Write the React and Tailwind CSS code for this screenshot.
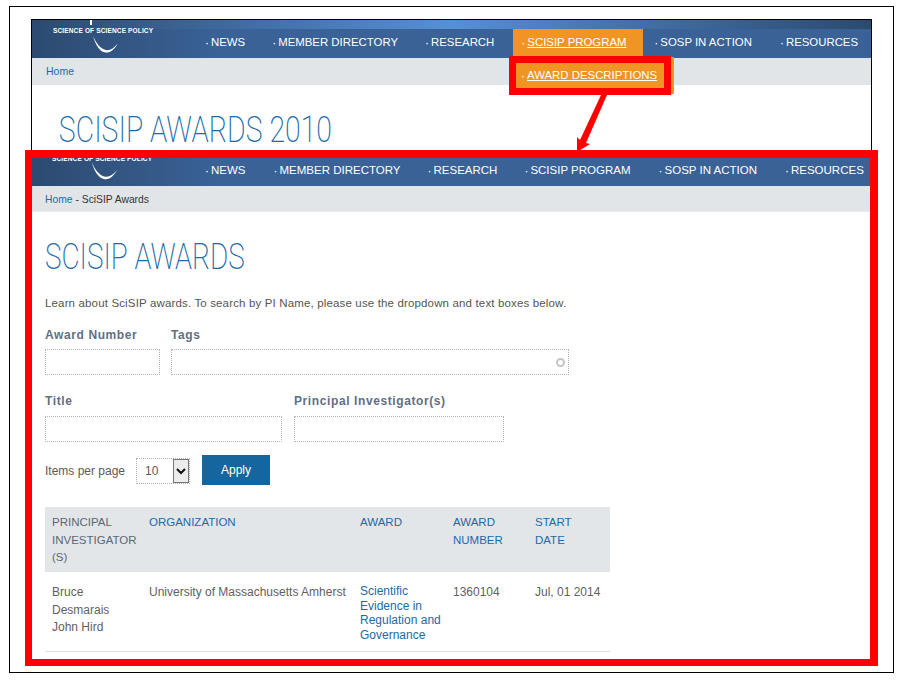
import React from "react";

const sans = "font-['Liberation_Sans',Arial,sans-serif]";

const upperNav = [
  { label: "NEWS", cls: "ml-[173px]" },
  { label: "MEMBER DIRECTORY", cls: "ml-[27px]" },
  { label: "RESEARCH", cls: "ml-[27px]" },
];

const lowerNav = [
  { label: "NEWS", cls: "ml-[173px]" },
  { label: "MEMBER DIRECTORY", cls: "ml-[28px]" },
  { label: "RESEARCH", cls: "ml-[27px]" },
  { label: "SCISIP PROGRAM", cls: "ml-[27px]" },
  { label: "SOSP IN ACTION", cls: "ml-[28px]" },
  { label: "RESOURCES", cls: "ml-[28px]" },
];

function Swoosh({ className }) {
  return (
    <svg className={className} viewBox="0 0 28 18" fill="none">
      <path d="M1 0C4 8 9 14 15 15C19 15.500 23 13 27 8C23 15 19 18 14 17.500C8 17 3 9 1 0Z" fill="#ffffff" />
    </svg>
  );
}

function NavItem({ label, cls }) {
  return (
    <span className={`${cls} flex items-center pb-[2px] text-white whitespace-nowrap`}>
      <span className="mr-[2px] text-[12px]">·</span>
      {label}
    </span>
  );
}

function Field({ label, width, gap, children }) {
  return (
    <div className={width}>
      <div className={`${gap} text-[12px] font-bold tracking-[0.6px] text-[#5f6f85] leading-[14px]`}>{label}</div>
      <div className="h-[26px] border border-dotted border-[#b4b4b4] flex items-center justify-end pr-[3px]">
        {children}
      </div>
    </div>
  );
}

export default function App() {
  return (
    <div className={`${sans} w-[902px] h-[684px] bg-white pt-[6px] pl-[9px] overflow-hidden`}>
      <div className="relative w-[885px] h-[667px] border border-black pt-[12px] pl-[21px]">
        {/* first page capture, the lower capture sits on top of it */}
        <div className="w-[841px] h-[132px] border-t border-x border-black">
          <div className="relative h-[38px] flex flex-col">
            <div className="h-[9px] bg-gradient-to-r from-[#2c4a70] via-[#5590d8] to-[#2c4a70]" />
            <div className="h-[29px] flex items-center text-[11.400px] bg-gradient-to-r from-[#2c4a70] from-0% to-[#3a6296] to-[22%]">
              {upperNav.map((item) => (
                <NavItem key={item.label} {...item} />
              ))}
              <div className="ml-[19px] w-[130px] h-full bg-[#f09423] flex items-center pl-[8px] pb-[2px] text-white">
                <span className="mr-[2px] text-[12px]">·</span>
                <span className="underline">SCISIP PROGRAM</span>
              </div>
              <NavItem label="SOSP IN ACTION" cls="ml-[11px]" />
              <NavItem label="RESOURCES" cls="ml-[28px]" />
            </div>
            <div className="absolute left-[21px] top-[6px] text-[6.500px] font-bold tracking-[0.15px] text-white whitespace-nowrap">
              SCIENCE OF SCIENCE POLICY
            </div>
            <div className="absolute left-[58px] top-0 w-[2px] h-[5px] bg-white" />
            <Swoosh className="absolute left-[60px] top-[16px] w-[27px] h-[17px]" />
          </div>
          <div className="h-[27px] bg-[#e1e5e8] flex items-center pl-[14px] text-[10.500px] text-[#1c6aa6]">Home</div>
          <h1 className="pl-[34px] mt-[27px] text-[36px] leading-[36px] font-['Roboto',sans-serif] font-extralight text-[#1c6aa6] whitespace-nowrap origin-left scale-x-[0.79]">
            SCISIP AWARDS 2010
          </h1>
        </div>

        {/* highlight round the dropdown entry */}
        <div className="absolute left-[499px] top-[50px] w-[165px] h-[37px] bg-[#f09423]">
          <div className="w-[162px] h-[39px] -mt-px border-[7px] border-[#ff0000] bg-[#f09423] flex items-center pl-[5px] text-[11.400px] text-white whitespace-nowrap">
            <span className="mr-[2px] text-[12px]">·</span>
            <span className="underline">AWARD DESCRIPTIONS</span>
          </div>
        </div>

        {/* arrow from the dropdown down to the lower capture */}
        <svg className="absolute left-[560px] top-[88px] w-[40px] h-[58px]" viewBox="0 0 40 58">
          <path d="M31 0L37 0L16 48L20 49L7 57L7 42L10 45Z" fill="#ff0000" />
        </svg>

        {/* second page capture */}
        <div className="absolute left-[15px] top-[143px] w-[853px] h-[516px] border-[7px] border-t-[8px] border-r-[8px] border-[#ff0000] bg-white overflow-hidden">
          <div className="relative h-[28px] flex items-center text-[11.500px] bg-gradient-to-r from-[#2c4a70] from-0% to-[#3a6296] to-[22%]">
            {lowerNav.map((item) => (
              <NavItem key={item.label} {...item} />
            ))}
            <div className="absolute left-[20px] -top-[4px] text-[6.500px] font-bold tracking-[0.15px] text-white whitespace-nowrap">
              SCIENCE OF SCIENCE POLICY
            </div>
            <Swoosh className="absolute left-[59px] top-[4px] w-[27px] h-[18px]" />
          </div>
          <div className="h-[26px] bg-[#e1e5e8] border-b border-[#e9ecee] flex items-center pl-[13px] pt-[2px] text-[10.300px] text-[#333]">
            <span className="text-[#1c6aa6]">Home</span>
            <span className="ml-[3px]">- SciSIP Awards</span>
          </div>

          <div className="pl-[13px]">
            <h1 className="mt-[27px] text-[36px] leading-[36px] font-['Roboto',sans-serif] font-extralight text-[#1c6aa6] whitespace-nowrap origin-left scale-x-[0.775]">
              SCISIP AWARDS
            </h1>
            <p className="mt-[21px] text-[11.500px] leading-[14px] tracking-[0.15px] text-[#555]">
              Learn about SciSIP awards. To search by PI Name, please use the dropdown and text boxes below.
            </p>

            <div className="mt-[18px] flex gap-[11px]">
              <Field label="Award Number" width="w-[115px]" gap="mb-[7px]" />
              <Field label="Tags" width="w-[398px]" gap="mb-[7px]">
                <span className="w-[9px] h-[9px] rounded-full border-2 border-[#c4c4c4]" />
              </Field>
            </div>
            <div className="mt-[19px] flex gap-[12px]">
              <Field label="Title" width="w-[237px]" gap="mb-[8px]" />
              <Field label="Principal Investigator(s)" width="w-[210px]" gap="mb-[8px]" />
            </div>

            <div className="mt-[13px] flex items-center text-[12px] text-[#5a5a5a]">
              <span className="w-[91px] mt-[1px]">Items per page</span>
              <div className="mt-[2px] w-[54px] h-[26px] border border-dotted border-[#b4b4b4] flex items-center justify-between pl-[8px]">
                <span>10</span>
                <span className="w-[16px] h-[24px] bg-[#ececec] border border-[#777] flex items-center justify-center">
                  <svg className="w-[10px] h-[8px]" viewBox="0 0 10 8" fill="none">
                    <path d="M1 2L5 6L9 2" stroke="#111111" strokeWidth="2" />
                  </svg>
                </span>
              </div>
              <div className="ml-[12px] w-[68px] h-[30px] bg-[#15669f] text-white text-[12px] flex items-center justify-center">
                Apply
              </div>
            </div>

            <div className="mt-[22px] w-[565px] text-[12px] leading-[17.500px]">
              <div className="grid grid-cols-[97px_211px_93px_82px_82px] h-[65px] bg-[#e3e6e9] pt-[7px] text-[11.500px] text-[#1c6aa6]">
                <div className="pl-[7px] text-[#5a6675]">PRINCIPAL INVESTIGATOR (S)</div>
                <div className="pl-[7px]">ORGANIZATION</div>
                <div className="pl-[7px]">AWARD</div>
                <div className="pl-[7px] pr-[20px]">AWARD NUMBER</div>
                <div className="pl-[7px] pr-[30px]">START DATE</div>
              </div>
              <div className="grid grid-cols-[97px_211px_93px_82px_82px] h-[80px] border-b border-[#dcdfe2] pt-[12px] text-[#5f5f5f]">
                <div className="pl-[7px] mr-[20px]">
                  <div>Bruce</div>
                  <div>Desmarais</div>
                  <div>John Hird</div>
                </div>
                <div className="pl-[7px] whitespace-nowrap">University of Massachusetts Amherst</div>
                <div className="pl-[7px] leading-[14.500px] text-[#1c6aa6]">Scientific Evidence in Regulation and Governance</div>
                <div className="pl-[7px]">1360104</div>
                <div className="pl-[7px] whitespace-nowrap">Jul, 01 2014</div>
              </div>
            </div>
          </div>
        </div>
      </div>
    </div>
  );
}
